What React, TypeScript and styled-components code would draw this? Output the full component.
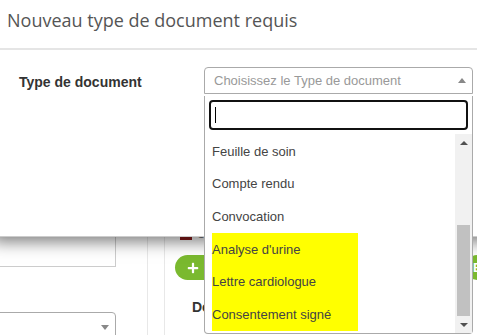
import { FC } from 'react';
import styled, { createGlobalStyle } from 'styled-components';
import { FaPlus } from 'react-icons/fa';

const documentTypes = [
  { name: 'Feuille de soin', highlighted: false },
  { name: 'Compte rendu', highlighted: false },
  { name: 'Convocation', highlighted: false },
  { name: "Analyse d'urine", highlighted: true },
  { name: 'Lettre cardiologue', highlighted: true },
  { name: 'Consentement signé', highlighted: true },
];

const App: FC = () => {
  return (
    <Screen>
      <GlobalStyle />
      <Page>
        <SideColumn>
          <FieldBox />
          <SelectBox>
            <DownCaret />
          </SelectBox>
        </SideColumn>
        <Gutter />
        <MainPanel>
          <DocTag>
            <RedMark />
            <TagText>Ordonnance</TagText>
          </DocTag>
          <Toolbar>
            <GreenButton>
              <FaPlus size={12} />
              <span>Ajouter</span>
            </GreenButton>
            <GreenButton $wide>Enregistrer</GreenButton>
          </Toolbar>
          <SectionTitle>Documents requis</SectionTitle>
        </MainPanel>
      </Page>

      <Modal>
        <Header>
          <Title>Nouveau type de document requis</Title>
        </Header>
        <Body>
          <FormRow>
            <Label>Type de document</Label>
            <SelectField>
              <Select>
                <Placeholder>Choisissez le Type de document</Placeholder>
                <UpCaret />
              </Select>
              <Dropdown>
                <SearchWrap>
                  <Search>
                    <Caret />
                  </Search>
                </SearchWrap>
                <ListArea>
                  <Options>
                    {documentTypes.map((d) => (
                      <Option key={d.name}>
                        <OptionLabel $highlighted={d.highlighted}>{d.name}</OptionLabel>
                      </Option>
                    ))}
                  </Options>
                  <Scrollbar>
                    <ScrollButton>
                      <ArrowUp />
                    </ScrollButton>
                    <Track>
                      <Thumb />
                    </Track>
                    <ScrollButton>
                      <ArrowDown />
                    </ScrollButton>
                  </Scrollbar>
                </ListArea>
              </Dropdown>
            </SelectField>
          </FormRow>
        </Body>
      </Modal>
    </Screen>
  );
};

export default App;

const GlobalStyle = createGlobalStyle`
  html, body {
    margin: 0;
    padding: 0;
    background: #fff;
    overflow: hidden;
  }
  body {
    font-family: "Liberation Sans", Arial, sans-serif;
  }
  * {
    box-sizing: border-box;
  }
`;

const Screen = styled.div`
  position: relative;
  width: 477px;
  height: 335px;
  overflow: hidden;
`;

/* page behind the modal */
const Page = styled.div`
  display: flex;
  height: 335px;
  margin-left: -12px;
`;

const SideColumn = styled.div`
  flex-shrink: 0;
  width: 160px;
  padding-top: 230px;
  border-right: 1px solid #e8e8e8;
`;

const FieldBox = styled.div`
  width: 128px;
  height: 37px;
  border: 1px solid #ccc;
`;

const SelectBox = styled.div`
  width: 128px;
  height: 34px;
  margin-top: 45px;
  border: 1px solid #aaa;
  border-radius: 4px;
  display: flex;
  justify-content: flex-end;
  align-items: flex-start;
  padding: 12px 6px 0 0;
`;

const DownCaret = styled.span`
  border-left: 4px solid transparent;
  border-right: 4px solid transparent;
  border-top: 5px solid #888;
`;

const Gutter = styled.div`
  flex-shrink: 0;
  width: 17px;
  border-right: 1px solid #e8e8e8;
`;

const MainPanel = styled.div`
  flex: 1;
  min-width: 0;
  padding: 228px 0 0 10px;
`;

const DocTag = styled.div`
  display: flex;
  align-items: center;
  gap: 5px;
  height: 12px;
  margin-left: 5px;
`;

const RedMark = styled.span`
  width: 12px;
  height: 12px;
  background: #8b1c1c;
`;

const TagText = styled.span`
  font-size: 11px;
  line-height: 12px;
  color: #666;
`;

const Toolbar = styled.div`
  display: flex;
  justify-content: space-between;
  width: 400px;
  margin-top: 15px;
`;

const GreenButton = styled.div<{ $wide?: boolean }>`
  flex-shrink: 0;
  display: flex;
  align-items: center;
  gap: 14px;
  height: 25px;
  width: ${(p) => (p.$wide ? '110px' : '84px')};
  padding-left: ${(p) => (p.$wide ? '8px' : '12px')};
  border-radius: 13px;
  background: #7ab92f;
  color: #fff;
  font-size: 13px;
  font-weight: bold;
`;

const SectionTitle = styled.h3`
  margin: 17px 0 0 17px;
  font-size: 14px;
  line-height: 20px;
  font-weight: bold;
  color: #333;
  white-space: nowrap;
`;

/* modal */
const Modal = styled.div`
  position: absolute;
  top: -9px;
  left: -8px;
  width: 560px;
  height: 246px;
  background: #fff;
  border: 1px solid rgba(0, 0, 0, 0.2);
  box-shadow: 0 5px 15px rgba(0, 0, 0, 0.5);
`;

const Header = styled.div`
  padding: 15px 15px 15px 14px;
  border-bottom: 2px solid #e5e5e5;
`;

const Title = styled.h4`
  margin: 0;
  font-family: "Open Sans", sans-serif;
  font-size: 18px;
  font-weight: 400;
  line-height: 26px;
  color: #555;
`;

const Body = styled.div`
  padding: 17px 0 0 26px;
`;

const FormRow = styled.div`
  display: grid;
  grid-template-columns: 185px 269px;
`;

const Label = styled.label`
  padding-top: 2px;
  font-size: 14px;
  line-height: 27px;
  font-weight: bold;
  color: #333;
`;

const SelectField = styled.div`
  position: relative;
`;

const Select = styled.div`
  display: flex;
  align-items: center;
  height: 27px;
  padding: 0 6px 0 9px;
  border: 1px solid #aaa;
  border-radius: 4px 4px 0 0;
`;

const Placeholder = styled.span`
  font-size: 13px;
  color: #999;
`;

const UpCaret = styled.span`
  margin-left: auto;
  border-left: 4px solid transparent;
  border-right: 4px solid transparent;
  border-bottom: 5px solid #888;
`;

const Dropdown = styled.div`
  position: absolute;
  top: 100%;
  left: 0;
  width: 100%;
  height: 238px;
  display: flex;
  flex-direction: column;
  background: #fff;
  border: 1px solid #aaa;
  border-top: none;
  border-radius: 0 0 4px 4px;
`;

const SearchWrap = styled.div`
  padding: 4px;
`;

const Search = styled.div`
  display: flex;
  align-items: center;
  height: 30px;
  padding-left: 4px;
  border: 2px solid #111;
  border-radius: 4px;
`;

const Caret = styled.span`
  width: 1px;
  height: 16px;
  background: #000;
`;

const ListArea = styled.div`
  flex: 1;
  display: flex;
  min-height: 0;
`;

const Options = styled.ul`
  flex: 1;
  margin: 0;
  padding: 1px 0 0 0;
  list-style: none;
  overflow: hidden;
`;

const Option = styled.li`
  display: flex;
  height: 32.6px;
  padding-left: 7px;
`;

const OptionLabel = styled.span<{ $highlighted: boolean }>`
  display: flex;
  align-items: center;
  width: 146px;
  font-size: 13px;
  color: #444;
  background: ${(p) => (p.$highlighted ? '#ffff00' : 'transparent')};
`;

const Scrollbar = styled.div`
  width: 17px;
  display: flex;
  flex-direction: column;
  background: #f1f1f1;
`;

const ScrollButton = styled.div`
  height: 17px;
  display: flex;
  align-items: center;
  justify-content: center;
`;

const ArrowUp = styled.span`
  border-left: 4px solid transparent;
  border-right: 4px solid transparent;
  border-bottom: 4px solid #505050;
`;

const ArrowDown = styled.span`
  border-left: 4px solid transparent;
  border-right: 4px solid transparent;
  border-top: 4px solid #505050;
`;

const Track = styled.div`
  flex: 1;
  display: flex;
  flex-direction: column;
  justify-content: flex-end;
`;

const Thumb = styled.div`
  height: 91px;
  margin: 0 2px;
  background: #c1c1c1;
`;
